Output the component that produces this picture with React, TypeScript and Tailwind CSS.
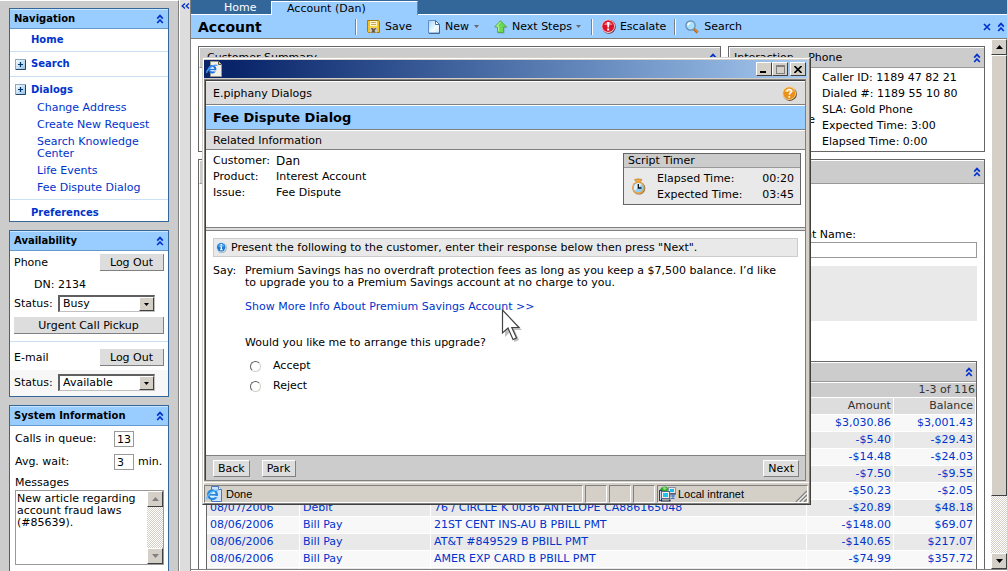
import React from 'react';

type Kids = { children?: React.ReactNode };

const link = 'text-[#0033cc]';

function Chevrons({ className = '' }: { className?: string }) {
  return (
    <svg viewBox="0 0 8 10" className={`h-[10px] w-2 shrink-0 ${className}`} fill="none" stroke="#0033cc" strokeWidth="1.7">
      <path d="M1.200 4.600 4 1.600 6.800 4.600M1.200 9 4 6 6.800 9" />
    </svg>
  );
}

function PlusIcon() {
  return (
    <svg viewBox="0 0 11 11" className="size-[11px] shrink-0">
      <defs>
        <linearGradient id="plus" x1="0" y1="0" x2="1" y2="1">
          <stop offset="0" stopColor="#ffffff" />
          <stop offset="1" stopColor="#8fc0e8" />
        </linearGradient>
      </defs>
      <rect x=".5" y=".5" width="10" height="10" fill="url(#plus)" stroke="#88aac4" />
      <path d="M10.500 1v9.500H1" fill="none" stroke="#224466" />
      <path d="M3 5.500h5M5.500 3v5" stroke="#003366" strokeWidth="1.200" />
    </svg>
  );
}

function SaveIcon() {
  return (
    <svg viewBox="0 0 13 13" className="size-[13px]">
      <path d="M.5.5h11l1 1v11H1.500l-1-1z" fill="#f5c11a" stroke="#a87a10" />
      <rect x="3" y="1" width="7" height="5" fill="#fff6d0" />
      <path d="M4 2.500h5M4 4.500h5" stroke="#c8a860" />
      <rect x="3" y="8" width="7" height="4.500" fill="#c9c9c9" />
      <path d="M4 8h2l2.500 4.500H6zM8 8h1.500L6 12.500H4z" fill="#5f5540" />
      <path d="M2 7h9" stroke="#ffe27a" />
    </svg>
  );
}

function PageIcon() {
  return (
    <svg viewBox="0 0 12 14" className="h-[14px] w-3">
      <defs>
        <linearGradient id="sheet" x1="0" y1="0" x2="1" y2="1">
          <stop offset="0" stopColor="#9fd4fb" />
          <stop offset=".6" stopColor="#f2faff" />
          <stop offset="1" stopColor="#cfe6f8" />
        </linearGradient>
      </defs>
      <path d="M.5.5h7l4 4v8.500H.5z" fill="url(#sheet)" stroke="#5c8ec4" />
      <path d="M7.500.5v4h4z" fill="#ffffff" stroke="#3a6ca8" />
      <path d="M1 13.500h10.500V5" fill="none" stroke="#44658c" />
    </svg>
  );
}

function UpIcon() {
  return (
    <svg viewBox="0 0 14 14" className="size-[14px]">
      <path d="M7 1.500 13.500 8h-3v5.500h-6V8H2z" fill="#7a8f9c" opacity=".6" />
      <path d="M6.500.7 12.500 7H9.500v5.500h-6V7H.7z" fill="#6cd850" stroke="#44a838" strokeWidth=".8" />
      <path d="M6.500 2 2.700 6.200h2v5" fill="none" stroke="#c2f5ae" />
    </svg>
  );
}

function AlertIcon() {
  return (
    <svg viewBox="0 0 15 15" className="size-[15px]">
      <circle cx="7.800" cy="7.800" r="7" fill="#6d3440" />
      <circle cx="7.200" cy="7.200" r="6.700" fill="#f4d4d8" />
      <circle cx="7.200" cy="7.200" r="5.900" fill="#d8142c" />
      <path d="M3 6a4.500 4.500 0 0 1 8.500 0z" fill="#f0707c" />
      <path d="M6 3h2.500L8 8.500H6.500zM6.200 9.600h2v2h-2z" fill="#fff" />
    </svg>
  );
}

function SearchIcon() {
  return (
    <svg viewBox="0 0 14 14" className="size-[14px]">
      <path d="m8.500 8.500 4 4" stroke="#b8651a" strokeWidth="2.800" />
      <path d="m8.500 8 4 4" stroke="#f0a048" strokeWidth="1" />
      <circle cx="5.500" cy="5.500" r="4.600" fill="#a8e0ff" stroke="#6688a8" strokeWidth="1.200" />
      <path d="M3 5.500A2.600 2.600 0 0 1 5.500 3" fill="none" stroke="#fff" strokeWidth="1.500" />
    </svg>
  );
}

function HelpIcon() {
  return (
    <svg viewBox="0 0 15 15" className="size-[15px]">
      <circle cx="7.900" cy="7.900" r="7" fill="#6b4a1c" />
      <circle cx="7.200" cy="7.200" r="6.900" fill="#f6d9a8" />
      <circle cx="7.200" cy="7.200" r="6" fill="#e8901c" />
      <path d="M2.500 6a5 5 0 0 1 9.500 0z" fill="#f8b858" />
      <path d="M5 5.600C5 2.800 9.600 2.900 9.500 5.500 9.400 7 7.300 7 7.300 8.800M7.300 10v1.700" fill="none" stroke="#fff" strokeWidth="1.600" />
    </svg>
  );
}

function InfoIcon() {
  return (
    <svg viewBox="0 0 11 11" className="size-[11px] shrink-0">
      <circle cx="5.800" cy="5.800" r="5.200" fill="#a8b4be" />
      <circle cx="5.200" cy="5.200" r="5" fill="#d4e8f8" />
      <circle cx="5.200" cy="5.200" r="4.200" fill="#1c78d0" />
      <path d="M2 4.500a3.400 3.400 0 0 1 6.500 0z" fill="#66b4f0" />
      <path d="M4.600 2h1.400v1.300H4.600zM4.200 4.300H6v3h.7v1H4v-1h.7v-2h-.5z" fill="#fff" />
    </svg>
  );
}

function ClockIcon() {
  return (
    <svg viewBox="0 0 15 17" className="h-[17px] w-[15px]">
      <path d="M3.500 1.500 7 .8l4 .7-2 3H5.500z" fill="#e8a84c" stroke="#b87820" strokeWidth=".6" />
      <circle cx="8" cy="10.300" r="6.300" fill="#8a7040" />
      <circle cx="7.300" cy="9.700" r="6.300" fill="#e8a040" />
      <circle cx="7.300" cy="9.700" r="4.800" fill="#8fd0fa" />
      <path d="M4 12.800A4.700 4.700 0 0 1 7 5l4 1-3.700 3.500z" fill="#fff" opacity=".7" />
      <path d="M7.300 6v4h3.200" fill="none" stroke="#111" strokeWidth="1.300" />
    </svg>
  );
}

function BrowserIcon() {
  return (
    <svg viewBox="0 0 16 16" className="size-4 shrink-0">
      <path d="M4.500.5h8l3 3v12h-11z" fill="#f2f0e8" stroke="#9a9888" />
      <path d="M12.500.5v3h3" fill="#d4d0c0" stroke="#55534a" />
      <circle cx="6.200" cy="8.300" r="3.200" fill="#fff" stroke="#2272d8" strokeWidth="2" />
      <path d="M3.500 8.500h6" stroke="#2272d8" strokeWidth="1.400" />
      <path d="M7.500 9.300h3.200v1.200H7.500z" fill="#f2f0e8" />
      <path d="M1 12C-.5 9 8 3 11.500 4.500" fill="none" stroke="#4c9cf0" strokeWidth="1.300" />
    </svg>
  );
}

function StatusPageIcon() {
  return (
    <svg viewBox="0 0 16 16" className="size-4 shrink-0">
      <path d="M5.500.5h7l3 3v12h-10z" fill="#cfe4fa" stroke="#4878c0" />
      <path d="M12.500.5v3h3" fill="#fff" stroke="#4878c0" />
      <circle cx="6.500" cy="8.700" r="4.300" fill="#e4f4ff" stroke="#2288e0" strokeWidth="2.400" />
      <path d="M3 8.800h8" stroke="#2288e0" strokeWidth="1.700" />
      <path d="M8 10h4v1.200H8z" fill="#cfe4fa" />
      <path d="M1 13.500C-.5 10 8.500 2.500 12.500 4.500" fill="none" stroke="#66b8f8" strokeWidth="1.200" />
    </svg>
  );
}

function NetworkIcon() {
  return (
    <svg viewBox="0 0 17 16" className="h-4 w-[17px] shrink-0">
      <path d="M1 5a4.500 4.500 0 0 1 8.500-2L8 6H1z" fill="#2fa52f" />
      <path d="M3.500 1.500 6 1l2 2-3 1z" fill="#8ce070" />
      <rect x="9.500" y="1.500" width="7" height="6" fill="#e8e8e0" stroke="#8a93a8" />
      <path d="M9.500 8h7.500" stroke="#222a44" />
      <rect x="11" y="3" width="4" height="3" fill="#1cb8e8" />
      <path d="M11 10h5M14 8v4M11.500 12.500h4" stroke="#4478c8" strokeWidth="1.200" />
      <rect x=".5" y="4.500" width="2" height="10" fill="#c8d8e8" stroke="#223c78" />
      <rect x="2.500" y="5.500" width="8" height="7" fill="#f0f0e8" stroke="#5a6484" />
      <rect x="4" y="7" width="5" height="4" fill="#1cc4f4" />
      <path d="M2 14.500h9.500" stroke="#222a44" strokeWidth="2" />
      <path d="M3 14h7" stroke="#d8d8d8" />
    </svg>
  );
}

function Pointer() {
  return (
    <svg viewBox="0 0 22 34" className="h-[34px] w-[22px]">
      <path d="M4 4v24l5-5 4.500 10 4.500-2L13.500 21H21z" fill="#888" opacity=".55" />
      <path d="M1.500 1v23l5.500-5 5 11.500 3.600-1.600L10.800 18.500H18z" fill="#fff" stroke="#444" strokeWidth="1.200" />
    </svg>
  );
}

function Arrow({ up = false, dim = false }: { up?: boolean; dim?: boolean }) {
  return (
    <svg viewBox="0 0 7 4" className={`h-1 w-[7px] ${up ? 'rotate-180' : ''}`}>
      <path d="M0 0h7L3.500 4z" fill={dim ? '#808080' : '#000'} />
    </svg>
  );
}

function SmallArrow({ color }: { color: string }) {
  return (
    <svg viewBox="0 0 5 3" className="h-[3px] w-[5px]">
      <path d="M0 0h5L2.500 3z" fill={color} />
    </svg>
  );
}

const bevel = 'border border-t-white border-l-white border-r-[#404040] border-b-[#404040] bg-[#d4d0c8]';
const track = 'bg-[repeating-conic-gradient(#d4d0c8_0_25%,#ffffff_0_50%)] bg-size-[2px_2px]';

function SidePanel({ title, children }: Kids & { title: string }) {
  return (
    <section className="border border-[#336699] bg-white">
      <h2 className="flex h-5 items-center justify-between border-b border-t border-b-[#6699cc] border-t-[#cce6ff] bg-[#99ccff] pl-1 pr-1 text-[10px] font-bold">
        {title}
        <button aria-label={`Collapse ${title}`}><Chevrons /></button>
      </h2>
      {children}
    </section>
  );
}

function SideButton({ children, className = '' }: Kids & { className?: string }) {
  return (
    <button className={`h-[17px] border-b border-r border-b-[#808080] border-r-[#808080] bg-[#dddddd] pt-px ${className}`}>{children}</button>
  );
}

function StatusSelect({ id, value }: { id: string; value: string }) {
  return (
    <div className="flex items-center">
      <label htmlFor={id} className="w-11">Status:</label>
      <div className="relative w-[97px]">
        <select id={id} defaultValue={value} className="block h-[17px] w-full appearance-none border-b border-l-2 border-r border-t-2 border-b-[#c0c0c0] border-l-[#606060] border-r-[#c0c0c0] border-t-[#606060] bg-white pl-[3px] text-[11px] leading-3">
          <option>{value}</option>
        </select>
        <span className={`pointer-events-none absolute right-px top-[2px] flex h-[14px] w-[15px] items-center justify-center ${bevel}`}><SmallArrow color="#000" /></span>
      </div>
    </div>
  );
}

function Sidebar() {
  const dialogs = ['Change Address', 'Create New Request', 'Search Knowledge Center', 'Life Events', 'Fee Dispute Dialog'];
  return (
    <aside className="flex w-[179px] shrink-0 flex-col gap-2 overflow-hidden border-r border-t border-r-[#808080] border-t-white bg-[#cccccc] pl-[9px] pr-[9px] pt-[7px]">
      <SidePanel title="Navigation">
        <nav className={`text-[10px] font-bold ${link}`}>
          <a href="#home" className="flex h-[22px] items-center pl-[21px]">Home</a>
          <a href="#search" className="flex h-[25px] items-center gap-[5px] border-t border-[#cce0f5] pl-[5px]"><PlusIcon />Search</a>
          <div className="h-[123px] border-t border-[#cce0f5]">
            <a href="#dialogs" className="flex h-[25px] items-center gap-[5px] pl-[5px]"><PlusIcon />Dialogs</a>
            <ul className="flex flex-col gap-[5px] pl-[27px] pr-3 text-[11px] font-normal">
              {dialogs.map((d) => <li key={d}><a href="#dialog" className="block">{d}</a></li>)}
            </ul>
          </div>
          <a href="#preferences" className="flex h-[22px] items-center border-t border-[#cce0f5] pl-[21px] pt-1">Preferences</a>
        </nav>
      </SidePanel>
      <SidePanel title="Availability">
        <div className="px-1 pb-[7px] pt-[3px]">
          <div className="flex items-center justify-between">Phone<SideButton className="w-16">Log Out</SideButton></div>
          <div className="pb-1 pl-5 pt-2">DN: 2134</div>
          <StatusSelect id="phone-status" value="Busy" />
          <SideButton className="mt-[5px] block w-full">Urgent Call Pickup</SideButton>
        </div>
        <div className="border-t border-[#cce0f5] px-1 pb-1 pt-[7px]">
          <div className="flex items-center justify-between">E-mail<SideButton className="w-16">Log Out</SideButton></div>
        </div>
        <div className="bg-[#f7f7f7] px-1 pb-[5px] pt-1"><StatusSelect id="mail-status" value="Available" /></div>
      </SidePanel>
      <SidePanel title="System Information">
        <div className="flex flex-col gap-[7px] pb-20 pl-[5px] pr-1 pt-[5px]">
          <div className="flex items-center">
            <label htmlFor="calls" className="w-[99px]">Calls in queue:</label>
            <input id="calls" readOnly value="13" className="h-4 w-5 border border-[#999999] pl-[2px]" />
          </div>
          <div className="flex items-center">
            <label htmlFor="wait" className="w-[99px]">Avg. wait:</label>
            <input id="wait" readOnly value="3" className="h-4 w-5 border border-[#999999] pl-[2px]" />
            <span className="pl-1">min.</span>
          </div>
          <div>
            <label htmlFor="messages" className="block">Messages</label>
            <div className="mt-px flex h-[75px] border border-[#999999]">
              <textarea id="messages" readOnly defaultValue={'New article regarding account fraud laws (#85639).'} className="block min-w-0 flex-1 resize-none overflow-hidden pl-px pt-[2px] leading-3" />
              <div className={`flex w-4 flex-col justify-between ${track}`}>
                <button aria-label="Scroll up" className={`flex h-4 items-center justify-center ${bevel}`}><Arrow up dim /></button>
                <button aria-label="Scroll down" className={`flex h-4 items-center justify-center ${bevel}`}><Arrow dim /></button>
              </div>
            </div>
          </div>
        </div>
      </SidePanel>
    </aside>
  );
}

function Divider() {
  return <span className="h-4 w-[2px] border-l border-r border-l-[#808080] border-r-white" />;
}

function Toolbar() {
  return (
    <div className="flex h-6 shrink-0 items-center border-b border-[#808080] bg-[#99ccff] pl-[7px] pr-[2px]">
      <h1 className="w-[157px] text-[14px] font-bold leading-4">Account</h1>
      <Divider />
      <button className="ml-[10px] flex items-center gap-[5px]"><SaveIcon />Save</button>
      <button className="ml-4 flex items-center gap-[5px]"><PageIcon />New<SmallArrow color="#666" /></button>
      <button className="ml-[15px] flex items-center gap-1"><UpIcon />Next Steps<SmallArrow color="#666" /></button>
      <span className="ml-[10px] flex"><Divider /></span>
      <button className="ml-2 flex items-center gap-1"><AlertIcon />Escalate</button>
      <span className="ml-2 flex"><Divider /></span>
      <button className="ml-[9px] flex items-center gap-[5px]"><SearchIcon />Search</button>
      <button aria-label="Close" className="ml-auto">
        <svg viewBox="0 0 8 8" className="size-2"><path d="m1 1 6 6M7 1 1 7" stroke="#0033cc" strokeWidth="1.700" /></svg>
      </button>
      <button aria-label="Collapse" className="ml-[6px]"><Chevrons /></button>
    </div>
  );
}

function PanelHead({ children, className = '' }: Kids & { className?: string }) {
  return (
    <div className={`flex items-center border-b border-l border-t border-b-[#999999] border-l-white border-t-white bg-[#cccccc] pr-[3px] ${className}`}>
      {children && <h2>{children}</h2>}
      <button aria-label="Collapse section" className="ml-auto"><Chevrons /></button>
    </div>
  );
}

const rows = [
  ['', '', '', '$3,030.86', '$3,001.43'],
  ['', '', '', '-$5.40', '-$29.43'],
  ['', '', '', '-$14.48', '-$24.03'],
  ['', '', '', '-$7.50', '-$9.55'],
  ['', '', '', '-$50.23', '-$2.05'],
  ['08/07/2006', 'Debit', '76 / CIRCLE K 0036 ANTELOPE CA886165048', '-$20.89', '$48.18'],
  ['08/06/2006', 'Bill Pay', '21ST CENT INS-AU B PBILL PMT', '-$148.00', '$69.07'],
  ['08/06/2006', 'Bill Pay', 'AT&T #849529 B PBILL PMT', '-$140.65', '$217.07'],
  ['08/06/2006', 'Bill Pay', 'AMER EXP CARD B PBILL PMT', '-$74.99', '$357.72'],
  ['', '', '', '', ''],
];

function Transactions() {
  return (
    <section className="border border-[#666666] bg-white">
      <PanelHead className="h-5" />
      <table className="w-full table-fixed border-separate border-spacing-0">
        <colgroup>
          <col className="w-[93px]" />
          <col className="w-[131px]" />
          <col />
          <col className="w-[87px]" />
          <col className="w-[82px]" />
        </colgroup>
        <thead className="text-[#333333]">
          <tr><td colSpan={5} className="h-[15px] border-t border-white bg-[#cccccc] p-0 pr-px text-right">1-3 of 116</td></tr>
          <tr className="text-right">
            {['', '', '', 'Amount', 'Balance'].map((h, i) => (
              <th key={i} className="h-[17px] border-r border-t border-white bg-[#dddddd] py-0 pl-0 pr-[2px] font-normal">{h}</th>
            ))}
          </tr>
        </thead>
        <tbody className={link}>
          {rows.map((r, i) => (
            <tr key={i} className={i % 2 ? 'bg-[#e9e9e9]' : 'bg-[#f8f8f8]'}>
              {r.map((c, j) => (
                <td key={j} className={`h-[17px] truncate border-r border-t border-white py-0 pl-[3px] pr-[2px] ${j > 2 ? 'text-right' : ''}`}>{c}</td>
              ))}
            </tr>
          ))}
        </tbody>
      </table>
    </section>
  );
}

function Workspace() {
  return (
    <div className="flex min-h-0 flex-1 border-b border-[#808080]">
      <div className="flex min-w-0 flex-1 flex-col gap-[7px] overflow-hidden pl-[7px] pr-[6px] pt-[7px]">
        <div className="flex h-[106px] shrink-0 gap-[7px]">
          <section className="flex-1 border border-[#666666]"><PanelHead className="h-[21px] pl-[7px]">Customer Summary</PanelHead></section>
          <section className="w-[257px] border border-[#666666]">
            <PanelHead className="h-[21px] pl-1"><span className="whitespace-pre">Interaction  - Phone</span></PanelHead>
            <div className="flex justify-between pl-1 pr-[21px] pt-[2px] leading-4">
              <div className="w-[82px] pt-[42px] text-right">State</div>
              <div className="w-[141px]">
                <p>Caller ID: 1189 47 82 21</p>
                <p>Dialed #: 1189 55 10 80</p>
                <p>SLA: Gold Phone</p>
                <p>Expected Time: 3:00</p>
                <p>Elapsed Time: 0:00</p>
              </div>
            </div>
          </section>
        </div>
        <section className="min-h-0 flex-1 border border-b-0 border-[#666666]">
          <PanelHead className="h-6" />
          <div className="flex flex-col px-[7px]">
            <div className="flex flex-col pt-[45px]">
              <label htmlFor="account-name" className="mr-[121px] self-end pb-px">Account Name:</label>
              <input id="account-name" className="h-4 w-full border border-[#999999]" />
            </div>
            <div className="mb-10 mt-2 h-[55px] bg-[#e9e9e9]" />
            <Transactions />
          </div>
        </section>
      </div>
      <div className={`flex w-4 flex-col ${track}`}>
        <button aria-label="Scroll up" className={`flex h-4 shrink-0 items-center justify-center ${bevel}`}><Arrow up /></button>
        <div className={`h-[441px] min-h-0 ${bevel}`} />
        <div className="flex-1" />
        <button aria-label="Scroll down" className={`flex h-4 shrink-0 items-center justify-center ${bevel}`}><Arrow /></button>
      </div>
    </div>
  );
}

function DialogButton({ children }: Kids) {
  return <button className="h-[17px] border border-b-[#808080] border-l-white border-r-[#808080] border-t-white bg-[#dddddd] px-1 pt-px">{children}</button>;
}

function Pane({ children, className = '' }: Kids & { className?: string }) {
  return <div className={`flex h-[18px] items-center border border-b-white border-l-[#808080] border-r-white border-t-[#808080] ${className}`}>{children}</div>;
}

function DialogWindow() {
  return (
    <div role="dialog" aria-label="Fee Dispute Dialog" className="absolute left-[202px] top-[57px] w-[609px] border border-b-[#404040] border-l-[#d4d0c8] border-r-[#404040] border-t-[#d4d0c8] bg-[#d4d0c8]">
      <div className="border border-b-[#808080] border-l-white border-r-[#808080] border-t-white pt-px">
        <div className="mr-[2px] flex h-[18px] items-center bg-linear-to-r from-[#0a246a] from-5% to-[#a6caf0] pl-[2px] pr-px">
          <BrowserIcon />
          <button aria-label="Minimize" className={`ml-auto flex h-[14px] w-4 items-end pb-[2px] pl-[3px] ${bevel}`}><span className="h-[2px] w-[6px] bg-black" /></button>
          <button aria-label="Maximize" className={`flex h-[14px] w-4 items-center justify-center ${bevel}`}><span className="h-[9px] w-[9px] border border-t-2 border-[#808080]" /></button>
          <button aria-label="Close window" className={`ml-[2px] flex h-[14px] w-4 items-center justify-center ${bevel}`}>
            <svg viewBox="0 0 8 7" className="h-[7px] w-2"><path d="m.5 0 7 7M7.500 0l-7 7" stroke="#000" strokeWidth="1.600" /></svg>
          </button>
        </div>
        <div className="mr-[3px] mt-px border border-[#808080]">
          <div className="border-l border-t border-[#404040] bg-white">
            <div className="flex h-6 items-center justify-between border-b border-t border-b-[#808080] border-t-white bg-[#dddddd] pl-[7px] pr-2">
              <span className="pt-px">E.piphany Dialogs</span>
              <button aria-label="Help"><HelpIcon /></button>
            </div>
            <h2 className="flex h-[25px] items-center border-b border-t border-b-[#808080] border-t-white bg-[#99ccff] pl-[7px] text-[13px] font-bold leading-4">Fee Dispute Dialog</h2>
            <h3 className="flex h-5 items-center border-b border-t border-b-[#808080] border-t-white bg-[#dddddd] pl-[7px] pt-px">Related Information</h3>
            <div className="flex h-[77px] items-start justify-between pl-[7px] pr-1 pt-[3px]">
              <dl className="grid grid-cols-[63px_auto] leading-4">
                <dt>Customer:</dt><dd className="text-[12px]">Dan</dd>
                <dt>Product:</dt><dd>Interest Account</dd>
                <dt>Issue:</dt><dd>Fee Dispute</dd>
              </dl>
              <section className="w-[178px] border border-[#666666] bg-[#e9e9e9]">
                <h4 className="flex h-[14px] items-center border-b border-[#999999] bg-[#cccccc] pl-1 pt-px">Script Timer</h4>
                <div className="flex h-9 items-center pl-[7px] pr-[6px] pt-px leading-4">
                  <ClockIcon />
                  <dl className="ml-[11px] grid flex-1 grid-cols-[1fr_auto]">
                    <dt>Elapsed Time:</dt><dd>00:20</dd>
                    <dt>Expected Time:</dt><dd>03:45</dd>
                  </dl>
                </div>
              </section>
            </div>
            <div className="h-1 border-b border-t border-[#808080] bg-[#dddddd]" />
            <div className="h-[224px] px-[7px] pt-[7px]">
              <p className="flex h-[19px] items-center gap-1 border border-[#cccccc] bg-[#e9e9e9] pl-[2px]">
                <InfoIcon /><span className="pt-px">Present the following to the customer, enter their response below then press "Next".</span>
              </p>
              <div className="mt-2 flex">
                <span className="w-8 shrink-0">Say:</span>
                <div>
                  <p>Premium Savings has no overdraft protection fees as long as you keep a $7,500 balance. I’d like<br />to upgrade you to a Premium Savings account at no charge to you.</p>
                  <p className="mt-3"><a href="#more" className={link}>Show More Info About Premium Savings Account &gt;&gt;</a></p>
                  <fieldset className="mt-6">
                    <legend>Would you like me to arrange this upgrade?</legend>
                    <div className="mt-[7px] flex flex-col pl-[5px] leading-5">
                      {['Accept', 'Reject'].map((o) => (
                        <label key={o} className="flex items-center gap-3">
                          <input type="radio" name="answer" className="size-[11px] appearance-none rounded-full border border-b-[#d4d0c8] border-l-[#606060] border-r-[#d4d0c8] border-t-[#606060] bg-white checked:bg-black" />
                          {o}
                        </label>
                      ))}
                    </div>
                  </fieldset>
                </div>
              </div>
            </div>
            <div className="flex h-[25px] items-center gap-3 border-t border-[#808080] bg-[#cccccc] pl-[7px] pr-[6px]">
              <DialogButton>Back</DialogButton>
              <DialogButton>Park</DialogButton>
              <span className="ml-auto flex"><DialogButton>Next</DialogButton></span>
            </div>
          </div>
        </div>
        <div className="mt-px flex gap-[2px] border-t border-white pr-px pt-[2px] font-['Liberation_Sans',sans-serif] text-[11px]">
          <Pane className="flex-1 gap-1 pl-px"><StatusPageIcon />Done</Pane>
          <Pane className="w-[22px]" /><Pane className="w-[22px]" /><Pane className="w-[22px]" />
          <Pane className="w-[151px] gap-[2px] pl-px">
            <NetworkIcon />Local intranet
            <svg viewBox="0 0 12 12" className="ml-auto size-3 self-end"><path d="m1 12L12 1M5 12l7-7M9 12l3-3" stroke="#808080" strokeWidth="1.500" /><path d="m2.500 12L12 2.500M6.500 12 12 6.500" stroke="#fff" /></svg>
          </Pane>
        </div>
      </div>
    </div>
  );
}

export default function App() {
  return (
    <div className="relative flex h-screen overflow-hidden bg-white font-['DejaVu_Sans',Verdana,sans-serif] text-[11px] leading-3 text-black">
      <Sidebar />
      <div className="w-[11px] shrink-0 border-l border-white bg-[#dddddd]">
        <button aria-label="Hide sidebar" className="flex h-3 w-full items-center justify-center">
          <svg viewBox="0 0 9 6" className="h-[6px] w-[9px]"><path d="M4 .5 1.200 3 4 5.500M8 .5 5.200 3 8 5.500" fill="none" stroke="#0033cc" strokeWidth="1.400" /></svg>
        </button>
      </div>
      <main className="flex min-w-0 flex-1 flex-col border-l border-[#808080] pb-px">
        <div className="flex h-[15px] shrink-0 bg-[#336699] text-white">
          <a href="#home" className="w-20 border-b border-white pl-[33px] pt-[2px]">Home</a>
          <a href="#account" className="mt-px w-[147px] border-l border-r border-t border-l-white border-r-[#808080] border-t-white bg-[#99ccff] pl-[15px] pt-px text-black">Account (Dan)</a>
          <div className="flex-1 border-b border-white" />
        </div>
        <Toolbar />
        <Workspace />
      </main>
      <DialogWindow />
      <div className="pointer-events-none absolute left-[501px] top-[309px]"><Pointer /></div>
    </div>
  );
}
